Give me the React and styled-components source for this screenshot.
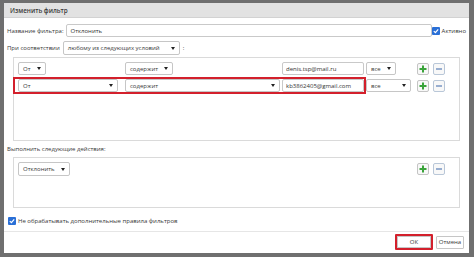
import React from 'react';
import styled, { createGlobalStyle } from 'styled-components';

const Global = createGlobalStyle`
    html, body {
        margin: 0;
        padding: 0;
        background: #6f6f6f;
    }
    * { box-sizing: border-box; }
`;

const Frame = styled.div`
    width: 474px;
    height: 257px;
    padding: 3px 5px 4px 4px;
    background: #6f6f6f;
    font-family: "Open Sans", "Noto Sans", sans-serif;
    font-size: 6px;
    color: #383838;
`;

const Dialog = styled.div`
    height: 100%;
    background: #fff;
    display: flex;
    flex-direction: column;
`;

const TitleBar = styled.div`
    height: 15px;
    flex: none;
    background: #e2e2e2;
    border-bottom: 1px solid #d2d2d2;
    display: flex;
    align-items: center;
    padding-left: 6px;
    font-size: 6.3px;
    font-weight: 600;
    color: #3a3a3a;
`;

const Body = styled.div`
    flex: 1;
    display: flex;
    flex-direction: column;
    padding: 0 9px 0 3px;
`;

const Row = styled.div`
    display: flex;
    align-items: center;
    margin-top: ${p => p.$top || 0}px;
`;

const Label = styled.span`
    white-space: nowrap;
    margin-right: ${p => p.$gap || 3}px;
`;

const TextField = styled.input`
    height: 13px;
    width: ${p => (p.$w ? `${p.$w}px` : 'auto')};
    flex: ${p => (p.$w ? 'none' : 1)};
    border: 1px solid #c9c9c9;
    border-radius: 2px;
    padding: 0 3px;
    font: inherit;
    color: #333;
    background: #fff;
    outline: none;
`;

const SelectBox = styled.div`
    height: ${p => p.$h || 13}px;
    width: ${p => (p.$w ? `${p.$w}px` : 'auto')};
    display: inline-flex;
    align-items: center;
    justify-content: space-between;
    gap: 6px;
    border: 1px solid #c6c6c6;
    border-radius: 2px;
    padding: 0 4px 0 4px;
    background: #fff;
    white-space: nowrap;
    flex: none;
`;

const Caret = styled.span`
    width: 0;
    height: 0;
    border-left: 2.5px solid transparent;
    border-right: 2.5px solid transparent;
    border-top: 3px solid #222;
`;

const Select = ({ children, w, h }) => (
    <SelectBox $w={w} $h={h}>
        <span>{children}</span>
        <Caret />
    </SelectBox>
);

const CheckBox = styled.span`
    width: 8px;
    height: 8px;
    flex: none;
    border-radius: 1px;
    background: #2a6fd6;
    display: inline-flex;
    align-items: center;
    justify-content: center;
    margin-right: ${p => p.$gap || 2}px;
`;

const Check = ({ gap }) => (
    <CheckBox $gap={gap}>
        <svg width="6" height="6" viewBox="0 0 6 6">
            <path d="M0.8 3.1 L2.4 4.6 L5.2 1.3" stroke="#fff" strokeWidth="1.2" fill="none" />
        </svg>
    </CheckBox>
);

const Panel = styled.div`
    margin-left: 6px;
    height: ${p => p.$h}px;
    border: 1px solid #dadada;
    padding: ${p => p.$pad};
    display: flex;
    flex-direction: column;
    gap: ${p => p.$gap || 0}px;
`;

const CondRow = styled.div`
    display: flex;
    align-items: center;
`;

const Cell = styled.div`
    width: ${p => p.$w}px;
    flex: none;
    display: flex;
`;

const Highlight = styled.div`
    display: flex;
    align-items: center;
    border: 2px solid #d3202c;
    padding-left: 3px;
    margin-left: -5px;
    height: 17px;
`;

const Tools = styled.div`
    display: flex;
    gap: 4px;
    margin-left: auto;
`;

const ToolBtn = styled.div`
    width: 12px;
    height: 12px;
    border: 1px solid ${p => (p.$minus ? '#b9c7d8' : '#c4c4c4')};
    border-radius: 2px;
    background: #f8f8f8;
    display: flex;
    align-items: center;
    justify-content: center;
`;

const PlusMinus = () => (
    <Tools>
        <ToolBtn>
            <svg width="8" height="8" viewBox="0 0 8 8">
                <path d="M3 0.5h2v2.5h2.5v2h-2.5v2.5h-2v-2.5h-2.5v-2h2.5z" fill="#3aa33a" />
            </svg>
        </ToolBtn>
        <ToolBtn $minus>
            <svg width="8" height="8" viewBox="0 0 8 8">
                <rect x="1" y="3.3" width="6" height="1.4" fill="#6f8fbf" />
            </svg>
        </ToolBtn>
    </Tools>
);

const ActionsRow = styled.div`
    display: flex;
    align-items: center;
`;

const Footer = styled.div`
    flex: none;
    height: 22px;
    margin-top: 3px;
    border-top: 1px solid #e6e6e6;
    display: flex;
    align-items: center;
    justify-content: flex-end;
    gap: 3px;
    padding: 0 5px 1px 0;
`;

const Button = styled.div`
    height: ${p => (p.$focus ? 16 : 13)}px;
    width: ${p => p.$w}px;
    border: ${p => (p.$focus ? '2px solid #d3202c' : '1px solid #c6c6c6')};
    border-radius: 1px;
    background: #fff;
    display: flex;
    align-items: center;
    justify-content: center;
    box-shadow: ${p => (p.$focus ? 'inset 0 0 0 1px #c6c6c6' : 'none')};
`;

const App = () => (
    <Frame>
        <Global />
        <Dialog>
            <TitleBar>Изменить фильтр</TitleBar>
            <Body>
                <Row $top={6}>
                    <Label $gap={3}>Название фильтра:</Label>
                    <TextField value="Отклонить" readOnly />
                    <Check gap={2} />
                    <span style={{ marginRight: -6 }}>Активно</span>
                </Row>
                <Row $top={4}>
                    <Label $gap={3}>При соответствии</Label>
                    <Select w={117} h={14}>любому из следующих условий</Select>
                    <Label style={{ marginLeft: 3 }}>:</Label>
                </Row>
                <Panel $h={84} $pad="4px 14px 0 4px" $gap={2} style={{ marginTop: 2 }}>
                    <CondRow>
                        <Cell $w={107}><Select>От</Select></Cell>
                        <Cell $w={157}><Select>содержит</Select></Cell>
                        <Cell $w={84}><TextField $w={82} value="denis.tsp@mail.ru" readOnly /></Cell>
                        <Cell $w={50}><Select>все</Select></Cell>
                        <PlusMinus />
                    </CondRow>
                    <CondRow>
                        <Highlight>
                            <Cell $w={107}><Select w={100}>От</Select></Cell>
                            <Cell $w={157}><Select w={155}>содержит</Select></Cell>
                            <Cell $w={82}><TextField $w={82} value="kb3862405@gmail.com" readOnly /></Cell>
                        </Highlight>
                        <Cell $w={50}><Select w={45}>все</Select></Cell>
                        <PlusMinus />
                    </CondRow>
                </Panel>
                <Row $top={3} style={{ height: 10 }}>
                    <Label>Выполнить следующие действия:</Label>
                </Row>
                <Panel $h={51} $pad="4px 14px 0 4px" style={{ marginTop: 3 }}>
                    <ActionsRow>
                        <Select h={14}>Отклонить</Select>
                        <PlusMinus />
                    </ActionsRow>
                </Panel>
                <Row $top={9} style={{ paddingLeft: 1 }}>
                    <Check gap={2} />
                    <span>Не обрабатывать дополнительные правила фильтров</span>
                </Row>
            </Body>
            <Footer>
                <Button $focus $w={38}>ОК</Button>
                <Button $w={28}>Отмена</Button>
            </Footer>
        </Dialog>
    </Frame>
);

export default App;
